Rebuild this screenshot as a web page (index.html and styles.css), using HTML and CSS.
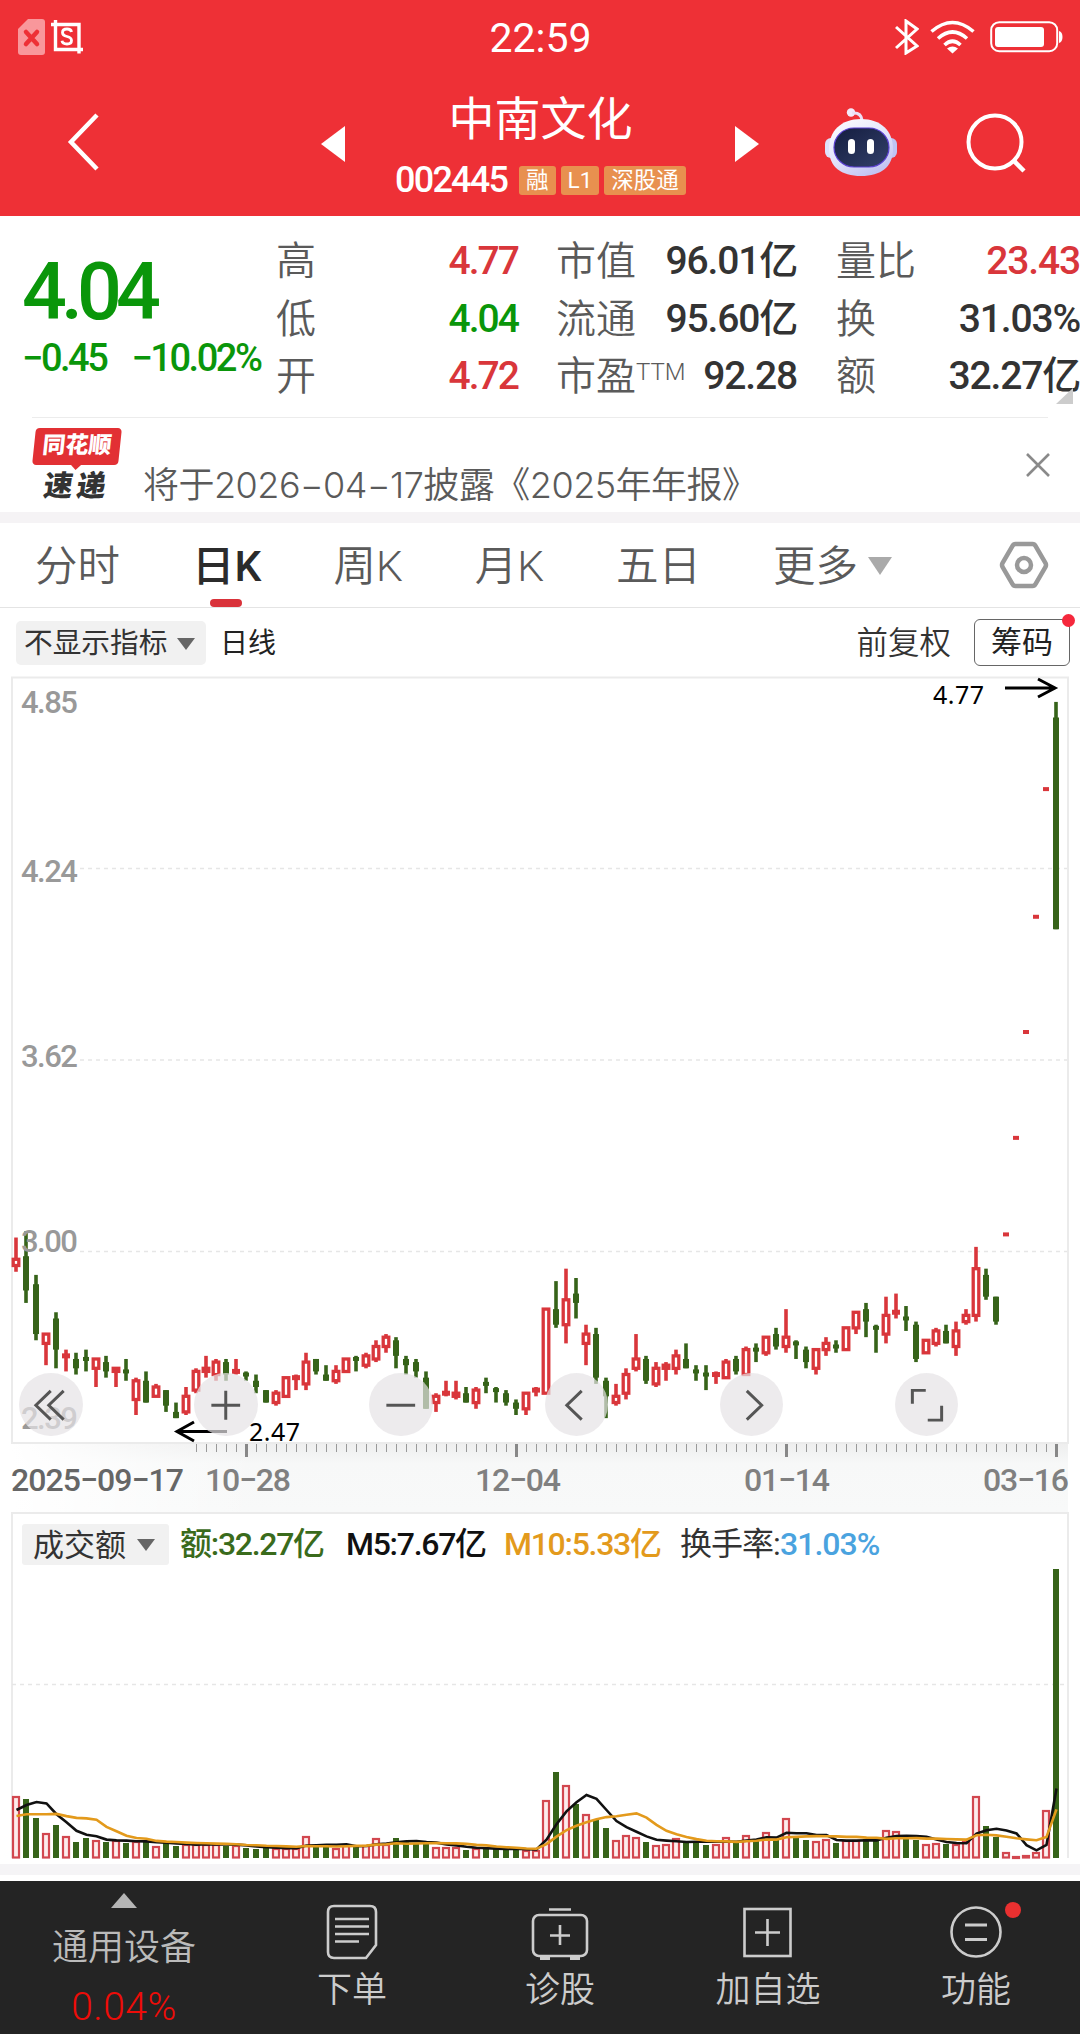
FILE: index.html
```html
<!DOCTYPE html>
<html lang="zh-CN">
<head>
    <meta charset="UTF-8">
    <title>中南文化 002445</title>
    <link rel="stylesheet" href="styles.css">
</head>
<body>

    <header class="header">
        <!-- Status bar -->
        <div class="status">
            <div class="status-left">
                <svg width="27" height="36" viewBox="0 0 27 36">
                    <path d="M10 0h14q3 0 3 3v30q0 3-3 3H3q-3 0-3-3V10z" fill="#f9979b"/>
                    <path d="M8 13l11 12M19 13L8 25" stroke="#ee3036" stroke-width="4.5" stroke-linecap="round"/>
                </svg>
                <svg width="32" height="34" viewBox="0 0 32 34" fill="none" stroke="#fff" stroke-width="3.4">
                    <path d="M0 4.500h28v29M4.500 0v29.500H32"/>
                    <path d="M20.500 12q-.5-3-4.500-3-4.500 0-4.500 3.500 0 3 4.500 4t4.500 4q0 3.500-4.500 3.500t-5-3.200" stroke-width="2.800"/>
                </svg>
            </div>
            <div class="clock">22:59</div>
            <div class="status-right">
                <svg width="24" height="36" viewBox="0 0 24 36" fill="none" stroke="#fff" stroke-width="3">
                    <path d="M1 8l21 19-11 7V2l11 8L1 29"/>
                </svg>
                <svg width="45" height="34" viewBox="0 0 45 34" fill="none" stroke="#fff" stroke-width="3.600">
                    <path d="M1.500 11.500q21-18 42 0M8 18.500q14.500-13 29 0M14.500 25q8-7.500 16 0"/>
                    <path d="M17 28.500q5.500-4 11 0l-5.500 5z" fill="#fff" stroke="none"/>
                </svg>
                <svg width="73" height="32" viewBox="0 0 73 32">
                    <rect x="1.200" y="1.200" width="66" height="29" rx="8" fill="none" stroke="#fff" stroke-width="2"/>
                    <rect x="5" y="6" width="49" height="20" rx="3" fill="#fff"/>
                    <path d="M69 10q3.500 1 3.500 6T69 22z" fill="#fff"/>
                </svg>
            </div>
        </div>

        <!-- Title bar -->
        <div class="titlebar">
            <svg class="back" width="34" height="58" viewBox="0 0 34 58" fill="none" stroke="#fff" stroke-width="4.500">
                <path d="M30 2L4 29l26 27"/>
            </svg>
            <svg class="prev" width="25" height="36" viewBox="0 0 25 36"><path d="M24 0v36L0 18z" fill="#fff"/></svg>
            <div class="stock">
                <h1>中南文化</h1>
                <div class="stock-sub">
                    <span class="code num">002445</span>
                    <span class="tag">融</span>
                    <span class="tag">L1</span>
                    <span class="tag">深股通</span>
                </div>
            </div>
            <svg class="next" width="25" height="36" viewBox="0 0 25 36"><path d="M0 0v36l24-18z" fill="#fff"/></svg>
            <svg class="robot" width="72" height="68" viewBox="0 0 72 68">
                <defs>
                    <linearGradient id="shell" x1="0" y1="0" x2=".6" y2="1">
                        <stop offset="0" stop-color="#fff"/>
                        <stop offset=".6" stop-color="#e2e3fb"/>
                        <stop offset="1" stop-color="#c3c4f2"/>
                    </linearGradient>
                    <linearGradient id="face" x1="0" y1="0" x2="1" y2="1">
                        <stop offset="0" stop-color="#141d3f"/>
                        <stop offset="1" stop-color="#33406a"/>
                    </linearGradient>
                </defs>
                <circle cx="26" cy="4.500" r="4.200" fill="#f3e9fa"/>
                <path d="M27 5q9-1 10 7" fill="none" stroke="#ecdff5" stroke-width="3"/>
                <rect x="0" y="30" width="14" height="20" rx="6" fill="#dfe1fb"/>
                <rect x="58" y="30" width="14" height="20" rx="6" fill="#bfc4f4"/>
                <path d="M36 11c20 0 32 12 32 30S56 68 36 68 4 59 4 41s12-30 32-30z" fill="url(#shell)"/>
                <rect x="9" y="20" width="55" height="39" rx="20" fill="url(#face)" stroke="#5a3fd0" stroke-width="1.200"/>
                <rect x="23" y="31" width="7" height="15" rx="3.500" fill="#fff"/>
                <rect x="42" y="31" width="7" height="15" rx="3.500" fill="#fff"/>
            </svg>
            <svg class="search" width="62" height="62" viewBox="0 0 62 62" fill="none" stroke="#fff" stroke-width="4">
                <circle cx="29" cy="30" r="26.500"/>
                <path d="M48 49l10 10" stroke-width="4.500"/>
            </svg>
        </div>
    </header>

    <!-- Quote -->
    <section class="quote">
        <div class="price">
            <div class="last num">4.04</div>
            <div class="change num"><span>−0.45</span><span>−10.02%</span></div>
        </div>
        <dl class="stats">
            <div><dt>高</dt><dd class="num up">4.77</dd></div>
            <div><dt>低</dt><dd class="num down">4.04</dd></div>
            <div><dt>开</dt><dd class="num up">4.72</dd></div>
        </dl>
        <dl class="stats wide">
            <div><dt>市值</dt><dd class="num">96.01亿</dd></div>
            <div><dt>流通</dt><dd class="num">95.60亿</dd></div>
            <div><dt>市盈<sup>TTM</sup></dt><dd class="num">92.28</dd></div>
        </dl>
        <dl class="stats wide">
            <div><dt>量比</dt><dd class="num up">23.43</dd></div>
            <div><dt>换</dt><dd class="num">31.03%</dd></div>
            <div><dt>额</dt><dd class="num">32.27亿</dd></div>
        </dl>
        <i class="corner"></i>
    </section>

    <!-- Notice -->
    <section class="news">
        <div class="news-logo">
            <div class="news-brand"><span>同花顺</span></div>
            <div class="news-name">速递</div>
        </div>
        <p>将于2026−04−17披露《2025年年报》</p>
        <svg class="close" width="24" height="24" viewBox="0 0 24 24" stroke="#8a8a8a" stroke-width="2.600">
            <path d="M1 1l22 22M23 1L1 23"/>
        </svg>
    </section>

    <!-- Period tabs -->
    <nav class="tabs">
        <a>分时</a>
        <a class="active">日K</a>
        <a>周K</a>
        <a>月K</a>
        <a>五日</a>
        <a>更多 <i class="caret"></i></a>
        <svg class="settings" width="50" height="48" viewBox="0 0 50 48" fill="none" stroke="#999" stroke-width="4.500">
            <path d="M16.500 3h17q2 0 3 2l10 17q1 2 0 4l-10 17q-1 2-3 2h-17q-2 0-3-2l-10-17q-1-2 0-4l10-17q1-2 3-2z"/>
            <circle cx="25" cy="24" r="7"/>
        </svg>
    </nav>

    <div class="toolbar">
        <span class="chip">不显示指标<i class="caret"></i></span>
        <span class="line-name">日线</span>
        <span class="adjust">前复权</span>
        <span class="chips-btn">筹码</span>
    </div>

    <!-- K line -->
    <section class="kline">
        <svg id="kline" width="1080" height="768" viewBox="0 676 1080 768"></svg>
        <div class="controls">
            <button><svg viewBox="0 0 64 64"><path d="M32 18L17 32.500 32 47M45 18L30 32.500 45 47"/></svg></button>
            <button><svg viewBox="0 0 64 64"><path d="M32 18v29M17.500 32.500h29"/></svg></button>
            <button><svg viewBox="0 0 64 64"><path d="M17.500 32.500h29"/></svg></button>
            <button><svg viewBox="0 0 64 64"><path d="M37 18L22 32.500 37 47"/></svg></button>
            <button><svg viewBox="0 0 64 64"><path d="M27 18l15 14.500L27 47"/></svg></button>
            <button><svg viewBox="0 0 64 64"><path d="M17.500 31V17.500H31M47 33v14.500H33"/></svg></button>
        </div>
    </section>
    <div class="axis">
        <svg id="axis" width="1080" height="68" viewBox="0 1444 1080 68"></svg>
    </div>

    <!-- Turnover -->
    <section class="volume">
        <div class="legend">
            <span class="chip">成交额<i class="caret"></i></span>
            <span class="amount num">额:32.27亿</span>
            <span class="m5 num">M5:7.67亿</span>
            <span class="m10 num">M10:5.33亿</span>
            <span class="rate num">换手率:<b>31.03%</b></span>
        </div>
        <svg id="volume" width="1080" height="292" viewBox="0 1568 1080 292"></svg>
    </section>
    <div class="band"></div>

    <!-- Bottom bar -->
    <footer class="bottom">
        <div class="sector">
            <i class="caret-up"></i>
            <span>通用设备</span>
            <em>0.04%</em>
        </div>
        <div class="action">
            <svg width="60" height="56" viewBox="0 0 60 56">
                <path d="M12 2h36q6 0 6 6v33L44 54H12q-6 0-6-6V8q0-6 6-6z"/>
                <path d="M13 15h34M13 22.500h34M13 30h34M13 37.500h24"/>
            </svg>
            <span>下单</span>
        </div>
        <div class="action">
            <svg width="60" height="56" viewBox="0 0 60 56">
                <rect x="3" y="11" width="54" height="41" rx="6"/>
                <path d="M19 5.500h22M30 21v20M20 31.500h20"/>
                <path d="M10 54h10M40 54h10" stroke-width="4"/>
            </svg>
            <span>诊股</span>
        </div>
        <div class="action">
            <svg width="60" height="56" viewBox="0 0 60 56">
                <rect x="6.500" y="5" width="46" height="47"/>
                <path d="M29.500 15v27M17 28.500h25"/>
            </svg>
            <span>加自选</span>
        </div>
        <div class="action">
            <svg width="60" height="56" viewBox="0 0 60 56">
                <circle cx="30" cy="28" r="24.500"/>
                <path d="M19 21h22M19 35.500h22" stroke-width="3"/>
            </svg>
            <span>功能</span>
            <i class="dot"></i>
        </div>
    </footer>

    <script src="script.js"></script>
</body>
</html>
```

FILE: styles.css
```css
* {
    box-sizing: border-box;
}

body {
    margin: 0;
    width: 1080px;
    height: 2034px;
    background: #fff;
    color: #333;
    font-family: Roboto, "Noto Sans CJK SC", sans-serif;
    line-height: 1;
    overflow: hidden;
}

svg {
    display: block;
    flex: none;
}

/* Narrow digits */
.num {
    font-weight: 500;
    letter-spacing: -0.05em;
    white-space: nowrap;
}

.up {
    color: #d9363b;
}

.down {
    color: #0a960a;
}

/* Header */
.header {
    height: 216px;
    background: #ee3036;
    color: #fff;
}

.status {
    height: 72px;
    display: grid;
    grid-template-columns: 1fr auto 1fr;
    align-items: center;
    padding: 1px 17px 0 18px;
}

.status-left,
.status-right {
    display: flex;
    align-items: center;
    gap: 6px;
}

.status-right {
    justify-content: flex-end;
    gap: 11px;
}

.status-right svg:last-child {
    margin-left: 4px;
}

.clock {
    padding-top: 3px;
    font-size: 41px;
}

.titlebar {
    display: flex;
    height: 144px;
}

.back {
    margin: 41px 0 0 67px;
}

.prev {
    margin: 54px 0 0 220px;
}

.stock {
    width: 389px;
    display: flex;
    flex-direction: column;
    align-items: center;
}

.stock h1 {
    margin: 22px 0 0;
    font-size: 46px;
    font-weight: 400;
    line-height: 50px;
}

.stock-sub {
    display: flex;
    align-items: center;
    gap: 5px;
    margin-top: 18px;
}

.code {
    font-size: 36px;
    margin-right: 7px;
}

.tag {
    height: 29px;
    padding: 0 7px;
    border-radius: 3px;
    background: #e8904f;
    font-size: 22.500px;
    line-height: 29px;
}

.next {
    margin: 54px 0 0;
}

.robot {
    margin: 36px 0 0 65px;
}

.search {
    margin: 40px 0 0 69px;
}

/* Quote */
.quote {
    position: relative;
    display: grid;
    grid-template-columns: 254px 242px 280px 282px;
    height: 202px;
    padding-left: 22px;
}

.quote::after {
    content: "";
    position: absolute;
    left: 32px;
    right: 32px;
    bottom: 0;
    height: 1px;
    background: #ececec;
}

.last {
    margin-top: 36px;
    font-size: 79px;
    line-height: 80px;
    letter-spacing: -0.075em;
    color: #0a960a;
}

.change {
    display: flex;
    gap: 25px;
    margin-top: 5px;
    font-size: 38px;
    line-height: 42px;
    letter-spacing: -0.065em;
    color: #0a960a;
}

.stats {
    margin: 0;
    padding-top: 17px;
}

.stats + .stats {
    margin-left: 38px;
}

.stats:nth-child(3) {
    margin-right: 1px;
}

.stats div {
    display: flex;
    justify-content: space-between;
    height: 57.500px;
    line-height: 57.500px;
}

.stats dt {
    font-size: 40px;
    font-weight: 350;
    color: #5a5a5a;
}

.stats sup {
    font-size: 24px;
    line-height: 1;
    vertical-align: 10px;
}

.stats dd {
    margin: 0;
    font-size: 39px;
}

.wide .num {
    letter-spacing: -0.03em;
}

.corner {
    position: absolute;
    right: 7px;
    bottom: 14px;
    border-left: 17px solid transparent;
    border-bottom: 16px solid #ccc;
}

/* Notice */
.news {
    display: flex;
    height: 105px;
    padding-left: 34px;
    border-bottom: 11px solid #f5f3f5;
}

.news-logo {
    width: 86px;
    padding-top: 10px;
    text-align: center;
    font-weight: 900;
}

.news-brand {
    position: relative;
    height: 37px;
    border-radius: 4px;
    background: #e23034;
    color: #fff;
    font-size: 23px;
    line-height: 36px;
    transform: skewX(-6deg);
}

.news-brand::after {
    content: "";
    position: absolute;
    left: 38px;
    top: 36px;
    border: 6px solid transparent;
    border-top-color: #e23034;
}

.news-name {
    margin-top: 6px;
    font-size: 29px;
    line-height: 30px;
    letter-spacing: 4px;
    transform: skewX(-8deg);
}

.news p {
    margin: 46px 0 0 23px;
    width: 860px;
    font-family: Inter, "Noto Sans CJK SC", sans-serif;
    font-size: 36px;
    font-weight: 350;
    line-height: 42px;
    letter-spacing: -0.5px;
    color: #5a5a5a;
}

.close {
    margin: 35px 0 0 23px;
}

/* Tabs */
.tabs {
    display: flex;
    height: 85px;
    border-bottom: 1px solid #e4e4e4;
    padding: 0 31px 0 35px;
    font-size: 42.500px;
    font-weight: 350;
    line-height: 88px;
    color: #5a5a5a;
}

.tabs a {
    position: relative;
    margin-right: 72px;
    white-space: nowrap;
}

.tabs .active {
    font-weight: 500;
    color: #2b2b2b;
}

.tabs .active::after {
    content: "";
    position: absolute;
    left: 50%;
    bottom: 0;
    width: 32px;
    height: 8px;
    margin-left: -17px;
    border-radius: 4px;
    background: #d9323a;
}

.tabs a:nth-child(6) {
    margin-right: 0;
}

.settings {
    margin: 18px 0 0 auto;
}

.caret {
    display: inline-block;
    border: 9px solid transparent;
    border-top: 12px solid #666;
    border-bottom: 0;
}

.tabs .caret {
    border-width: 18px 12px 0;
    border-top-color: #aaa;
    vertical-align: 6px;
}

/* Toolbar */
.toolbar {
    display: flex;
    align-items: center;
    height: 68px;
    padding: 0 10px 0 16px;
}

.chip {
    display: flex;
    align-items: center;
    justify-content: space-between;
    width: 190px;
    height: 44px;
    margin-top: 1px;
    padding: 2px 11px 0 8px;
    border-radius: 5px;
    background: #f1f1f1;
    color: #333;
    font-size: 28.700px;
}

.line-name {
    margin: 4px 0 0 14px;
    font-size: 28px;
    color: #222;
}

.adjust {
    margin: 4px 0 0 auto;
    font-size: 31.500px;
    font-weight: 350;
}

.chips-btn {
    position: relative;
    width: 96px;
    height: 47px;
    margin-left: 23px;
    border: 1px solid #666;
    border-radius: 6px;
    font-size: 31px;
    line-height: 46px;
    text-align: center;
    color: #222;
}

.chips-btn::after {
    content: "";
    position: absolute;
    right: -6px;
    top: -6px;
    width: 13px;
    height: 13px;
    border-radius: 50%;
    background: #f5283c;
}

/* Charts */
.kline {
    position: relative;
    z-index: 1;
    height: 768px;
}

.kline svg {
    overflow: visible;
}

.controls {
    position: absolute;
    left: 19px;
    bottom: 8px;
    display: flex;
    gap: 111.700px;
}

.controls button {
    width: 63.500px;
    height: 63.500px;
    padding: 0;
    border: 0;
    border-radius: 50%;
    background: rgba(230, 227, 229, 0.7);
}

.controls path {
    fill: none;
    stroke: #555;
    stroke-width: 3;
}

.axis {
    height: 68px;
    background:
        linear-gradient(to right, #fff 12px, rgba(255, 255, 255, 0) 260px),
        linear-gradient(#eee, #f7f8f8 20px, #f8f9f9);
    background-size: 1068px 68px;
    background-repeat: no-repeat;
}

.grid {
    stroke: #e6e6e6;
    stroke-width: 1.500;
    stroke-dasharray: 4 4;
}

.frame {
    fill: none;
    stroke: #ebebeb;
    stroke-width: 2;
}

.price-label {
    font-size: 31px;
    font-weight: 500;
    letter-spacing: -0.050em;
    fill: #999;
}

.mark {
    font-family: "Noto Sans", sans-serif;
    font-size: 25px;
    letter-spacing: 0.500px;
    fill: #000;
}

.arrow {
    fill: none;
    stroke: #000;
    stroke-width: 3;
}

.date {
    font-size: 32px;
    font-weight: 500;
    fill: #808080;
}

.date.first {
    fill: #666;
}

.rise {
    fill: #fff;
    stroke: #d9363b;
    stroke-width: 3.300;
}

.rise.bar {
    fill: #fdecec;
    stroke: #d2474f;
    stroke-width: 2.200;
}

.fall {
    fill: #366319;
}

.line5,
.line10 {
    fill: none;
    stroke: #111;
    stroke-width: 2.600;
}

.line10 {
    stroke: #e39a1c;
}

.volume {
    height: 352px;
    background: #fff;
}

.legend {
    display: flex;
    align-items: center;
    height: 56px;
    margin: 0 11px;
    border: 2px solid #ebebeb;
    border-bottom: 0;
    padding: 6px 0 0 9px;
    font-size: 32px;
}

.legend .num {
    letter-spacing: -0.04em;
}

.legend .chip {
    width: 147px;
    height: 41px;
    margin: 0 11px 0 0;
    padding: 2px 14px 0 11px;
    border-radius: 3px;
    font-size: 31px;
}

.amount {
    width: 166px;
    color: #3a6b1c;
}

.m5 {
    width: 158px;
    color: #111;
}

.m10 {
    width: 176px;
    color: #e39a1c;
}

.legend .rate {
    font-weight: 400;
    letter-spacing: -0.03em;
}

.rate b {
    font-weight: 500;
    color: #4aa3df;
}

.band {
    height: 11px;
    margin-bottom: 6px;
    background: #f5f4f6;
}

/* Bottom bar */
.bottom {
    display: grid;
    grid-template-columns: 248px repeat(4, 208px);
    height: 153px;
    background: #242424;
    color: #ccc;
    font-size: 35px;
    font-weight: 350;
    text-align: center;
}

.sector {
    display: flex;
    flex-direction: column;
    align-items: center;
    color: #bbb;
}

.caret-up {
    margin-top: 12px;
    border: 13px solid transparent;
    border-bottom: 15px solid #b5b5b5;
    border-top: 0;
}

.sector span {
    margin-top: 21px;
    font-size: 36px;
    line-height: 38px;
}

.sector em {
    margin-top: 21px;
    font-size: 39px;
    font-style: normal;
    letter-spacing: 0.500px;
    color: #ee0c08;
}

.action {
    position: relative;
    display: flex;
    flex-direction: column;
    align-items: center;
}

.action svg {
    margin-top: 23px;
    fill: none;
    stroke: #ccc;
    stroke-width: 2.600;
}

.action span {
    margin-top: 12px;
    line-height: 38px;
}

.dot {
    position: absolute;
    left: 133px;
    top: 21px;
    width: 16px;
    height: 16px;
    border-radius: 50%;
    background: #e93030;
}
```

FILE: script.js
```js
// Daily candles: direction, high, body top, body bottom, low (in cents), turnover
const days = [
    ['r', 305, 298, 296, 294, 62], ['g', 307, 299, 288, 284, 59], ['g', 293, 290, 274, 272, 40],
    ['r', 274, 274, 271, 264, 25], ['g', 281, 279, 269, 263, 33], ['r', 269, 267, 266.5, 262, 22],
    ['g', 268, 266, 263, 261, 16], ['g', 269, 266, 266, 262, 20], ['r', 266, 266, 263, 257, 18],
    ['g', 267, 265, 262, 260, 16], ['r', 263, 263, 262, 257, 18], ['g', 266, 262, 262, 259, 15],
    ['r', 260, 259, 253, 248, 17], ['g', 262, 259, 252, 252, 17], ['r', 258, 257, 254, 254, 12],
    ['g', 256, 256, 251, 249, 15], ['g', 252, 249, 247, 247, 12], ['r', 257, 254, 249, 248, 14],
    ['r', 263, 262, 256, 255, 14], ['r', 267, 263, 262, 260, 14], ['r', 266, 265, 261, 259, 14],
    ['g', 266, 265, 261, 259, 12], ['r', 266, 262, 262, 261, 13], ['g', 262, 261, 261, 259, 10],
    ['g', 261, 259, 257, 255, 9], ['g', 256, 256, 252, 252, 10], ['r', 256, 255, 252, 251, 10],
    ['r', 260, 260, 254, 254, 10], ['r', 261, 260, 260, 256, 10], ['r', 268, 265, 258, 256, 22],
    ['g', 266, 266, 262, 261, 12], ['g', 264, 261, 259, 259, 12], ['r', 264, 262, 259, 258, 10],
    ['r', 266, 266, 262, 262, 13], ['g', 267, 266, 266, 262, 12], ['r', 268, 267, 264, 263, 13],
    ['r', 272, 270, 266, 265, 20], ['r', 274, 273, 270, 268, 14], ['g', 273, 272, 267, 263, 20],
    ['g', 267, 266, 264, 261, 16], ['g', 266, 265, 262, 260, 15], ['g', 262, 260, 250, 250, 15],
    ['r', 255, 254, 252, 249, 11], ['r', 259, 255, 255, 254, 11], ['r', 259, 255, 254, 253, 11],
    ['g', 257, 255, 252, 252, 8], ['r', 257, 256, 252, 250, 10], ['g', 260, 258, 258, 255, 9],
    ['g', 257, 256, 255, 252, 9], ['g', 256, 255, 252, 251, 9], ['g', 253, 252, 250, 248, 9],
    ['r', 255, 255, 250, 248, 8], ['r', 257, 256, 256, 254, 8], ['r', 282, 282, 255, 255, 58],
    ['g', 291, 282, 277, 276, 86], ['r', 295, 285, 277, 271, 73], ['g', 292, 287, 284, 279, 54],
    ['r', 277, 274, 271, 264, 44], ['g', 276, 274, 260, 258, 39], ['g', 260, 259, 254, 247, 30],
    ['r', 258, 254, 252, 251, 18], ['r', 263, 261, 255, 253, 23], ['r', 274, 266, 263, 262, 21],
    ['g', 267, 266, 259, 258, 16], ['r', 265, 263, 258, 257, 13], ['r', 265, 264, 263, 259, 14],
    ['r', 269, 267, 263, 261, 20], ['g', 271, 266, 263, 263, 17], ['g', 264, 262, 261, 259, 17],
    ['g', 264, 261, 261, 256, 13], ['r', 262, 261, 260.5, 258, 14], ['r', 266, 265, 260, 260, 21],
    ['g', 267, 266, 262, 261, 16], ['r', 270, 269, 261, 261, 23], ['g', 271, 269, 268, 265, 18],
    ['r', 273, 273, 268, 267, 26], ['g', 276, 274, 270, 269, 19], ['r', 282, 273, 270, 268, 40],
    ['g', 272, 271, 270, 266, 21], ['g', 270, 269, 265, 263, 18], ['r', 269, 269, 263, 261, 17],
    ['r', 273, 271, 269, 267, 19], ['g', 272, 270, 269, 268, 15], ['r', 276, 276, 269, 269, 18],
    ['r', 281, 281, 276, 274, 18], ['g', 284, 282, 278, 273, 19], ['g', 277, 276, 275, 268, 18],
    ['r', 286, 280, 274, 271, 28], ['r', 287, 281, 281, 279, 27], ['g', 283, 279, 278, 275, 19],
    ['g', 278, 277, 266, 265, 18], ['r', 272, 272, 268, 268, 14], ['r', 276, 275, 271, 270, 15],
    ['g', 277, 275, 271, 271, 14], ['r', 278, 275, 270, 267, 14], ['r', 282, 280, 278, 277, 17],
    ['r', 302, 295, 280, 278, 62], ['g', 295, 293, 286, 285, 32], ['g', 286, 286, 278, 277, 21],
    ['r', 306, 306, 306, 306, 6], ['r', 337, 337, 337, 337, 2], ['r', 371, 371, 371, 371, 3],
    ['r', 408, 408, 408, 408, 6], ['r', 449, 449, 449, 449, 48], ['g', 477, 472, 404, 404, 289]
];
// Turnover of the nine days before the first candle, for the averages
const before = [42, 40, 25, 29, 44, 34, 25, 32, 87];

const x = i => 16 + i * 10;
const y = cents => 677 + (485 - cents) * 3.114;

function rect(cls, left, top, width, height) {
    return `<rect class="${cls}" x="${left}" y="${top.toFixed(1)}" width="${width}" height="${height.toFixed(1)}"/>`;
}

// K line
let k = '<path class="frame" d="M12 1444V677.500H1068V1443H12"/>';
for (const gy of [868.5, 1060, 1251.5]) {
    k += `<path class="grid" d="M80 ${gy}H1067"/>`;
}
days.forEach(([dir, high, top, bottom, low], i) => {
    const up = dir === 'r';
    const color = up ? '#d9363b' : '#366319';
    const h = y(bottom) - y(top);
    if (high > low) {
        k += `<path d="M${x(i)} ${y(high)}V${y(low)}" stroke="${color}" stroke-width="3.600"/>`;
    }
    if (up && h > 3) {
        k += rect('rise', x(i) - 2.8, y(top), 5.6, h);
    } else if (up && high > low) {
        k += `<path d="M${x(i) - 4} ${y(top)}h8" stroke="${color}" stroke-width="5"/>`;
    } else {
        k += `<path d="M${x(i) - 3} ${y(top) - (h < 4 ? 2 : 0)}h6v${Math.max(h, 4)}h-6z" fill="${color}"/>`;
    }
});
[['4.85', 713], ['4.24', 882], ['3.62', 1067], ['3.00', 1252], ['2.39', 1429]].forEach(([t, ty]) => {
    k += `<text class="price-label" x="21" y="${ty}">${t}</text>`;
});
k += '<text class="mark" x="933" y="704">4.77</text><path class="arrow" d="M1005 688h50M1038 679l17 9-17 9"/>';
k += '<text class="mark" x="249" y="1441">2.47</text><path class="arrow" d="M227 1431.500h-50M194 1422l-17 9.500 17 9.500"/>';
document.getElementById('kline').innerHTML = k;

// Time axis
const marks = { 246: '10−28', 516: '12−04', 786: '01−14', 1056: '03−16' };
let a = '';
for (let tx = 196; tx <= 1056; tx += 10) {
    a += marks[tx]
        ? `<path d="M${tx + 0.5} 1444v13" stroke="#888" stroke-width="3"/>`
        : `<path d="M${tx + 0.5} 1444v8" stroke="#999"/>`;
}
a += '<text class="date first" x="11" y="1491" textLength="173">2025−09−17</text>';
[['10−28', 205], ['12−04', 475], ['01−14', 744], ['03−16', 983]].forEach(([t, tx]) => {
    a += `<text class="date" x="${tx}" y="1491" textLength="86">${t}</text>`;
});
document.getElementById('axis').innerHTML = a;

// Turnover bars and their averages
const base = 1858;
let v = '<path class="frame" d="M12 1568V1858M1068 1568V1858"/><path class="grid" d="M12 1684.500H1067"/>';
days.forEach((d, i) => {
    v += d[0] === 'r'
        ? rect('rise bar', x(i) - 3, base - d[5] + 1, 6, Math.max(d[5] - 1.5, 1))
        : rect('fall', x(i) - 3, base - d[5], 6, d[5]);
});
const all = before.concat(days.map(d => d[5]));
function average(n) {
    return days.map((d, i) => {
        const part = all.slice(i + 10 - n, i + 10);
        return `${x(i) + 0.5},${(base - part.reduce((s, t) => s + t, 0) / n).toFixed(1)}`;
    }).join(' ');
}
v += `<polyline class="line5" points="${average(5)}"/><polyline class="line10" points="${average(10)}"/>`;
document.getElementById('volume').innerHTML = v;
```
